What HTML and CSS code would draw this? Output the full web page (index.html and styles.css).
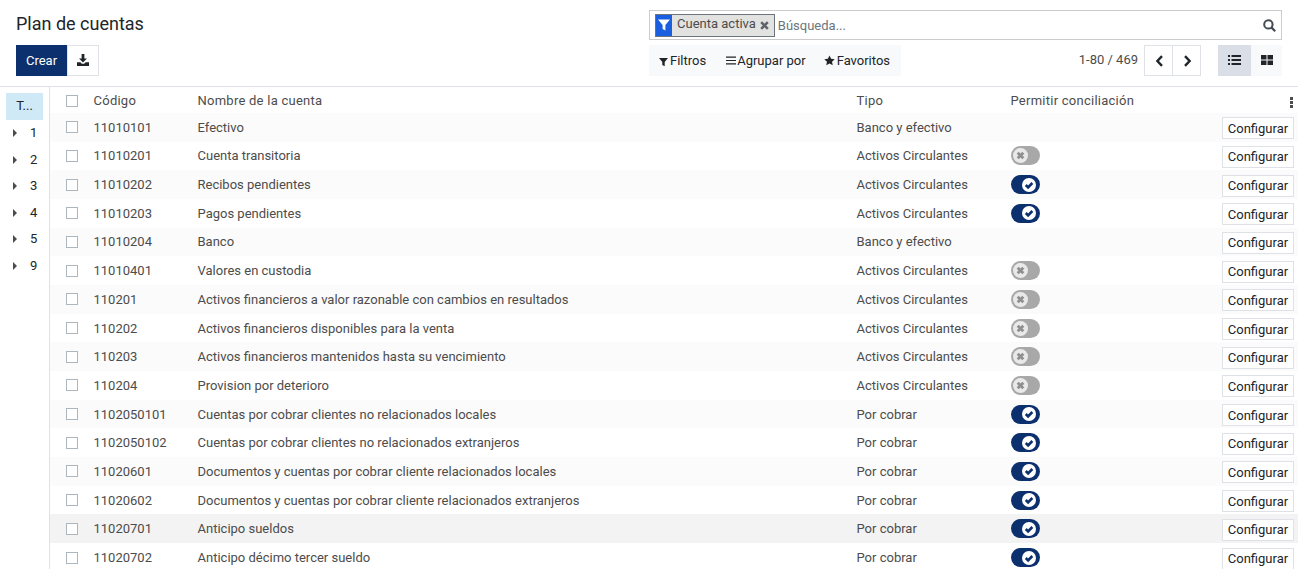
FILE: index.html
```html
<!DOCTYPE html>
<html lang="es">
<head>
    <meta charset="UTF-8">
    <title>Plan de cuentas</title>
    <link rel="stylesheet" href="styles.css">
</head>
<body>
    <svg class="sprites" width="0" height="0">
        <symbol id="i-check" viewBox="0 0 16 16"><circle cx="8" cy="8" r="8" fill="#fff"/><path d="M4.300 8 7 10.700l4.800-5" fill="none" stroke="#0c2f6e" stroke-width="3"/></symbol>
        <symbol id="i-cross" viewBox="0 0 16 16"><circle cx="8" cy="8" r="8" fill="#e9e9e9"/><path d="m5 5 6 6m0-6-6 6" fill="none" stroke="#8f8f8f" stroke-width="3"/></symbol>
    </svg>

    <header class="panel">
        <div class="panel-left">
            <h1 class="title">Plan de cuentas</h1>
            <div class="actions">
                <button class="btn-primary">Crear</button>
                <button class="btn-icon">
                    <svg width="12" height="12" viewBox="0 0 13 13"><path d="M5 0h3v5h2.800L6.500 9.300 2.200 5H5zM0 9h3.600l1.600 1.500h2.600L9.400 9H13v4H0z" fill="#212529"/></svg>
                </button>
            </div>
        </div>
        <div class="panel-right">
            <div class="search">
                <div class="facet">
                    <span class="facet-icon">
                        <svg width="12" height="12" viewBox="0 0 12 12"><path d="M0 .5h12L7.400 6v5.500L4.600 10V6z" fill="#fff"/></svg>
                    </span>
                    <span class="facet-label">Cuenta activa</span>
                    <svg class="facet-x" width="9" height="9" viewBox="0 0 9 9"><path d="m1.200 1.200 6.600 6.600m0-6.600L1.200 7.800" stroke="#5f636a" stroke-width="2.600"/></svg>
                </div>
                <span class="search-placeholder">Búsqueda...</span>
                <svg class="search-icon" width="13" height="13" viewBox="0 0 13 13"><circle cx="5.400" cy="5.400" r="4.200" fill="none" stroke="#444b52" stroke-width="2"/><path d="m8.600 8.600 3.600 3.600" stroke="#444b52" stroke-width="2.200"/></svg>
            </div>
            <div class="tools">
                <div class="filters">
                    <span class="filter"><svg width="9" height="10" viewBox="0 0 12 12"><path d="M0 .5h12L7.600 6v5.500L4.400 10V6z" fill="#212529"/></svg>Filtros</span>
                    <span class="filter"><svg class="group-icon" width="10" height="9" viewBox="0 0 10 9"><path d="M0 .5h10v1.200H0zM0 3.900h10v1.200H0zM0 7.300h10v1.200H0z" fill="#212529"/></svg>Agrupar por</span>
                    <span class="filter fav"><svg width="11" height="11" viewBox="0 0 20 20"><path d="m10 .8 2.900 6 6.600.8-4.900 4.500 1.300 6.600L10 15.400l-5.900 3.300 1.300-6.600L.5 7.600l6.600-.8z" fill="#212529"/></svg>Favoritos</span>
                </div>
                <div class="pager">
                    <span class="pager-count">1-80 / 469</span>
                    <div class="pager-btns">
                        <button class="btn-page"><svg width="9" height="12" viewBox="0 0 9 12"><path d="M7 1.200 2.400 6 7 10.800" fill="none" stroke="#212529" stroke-width="2.400"/></svg></button>
                        <button class="btn-page"><svg width="9" height="12" viewBox="0 0 9 12"><path d="M2 1.200 6.600 6 2 10.800" fill="none" stroke="#212529" stroke-width="2.400"/></svg></button>
                    </div>
                    <div class="views">
                        <button class="btn-view active"><svg width="13" height="10" viewBox="0 0 13 10"><path d="M0 0h2v2H0zM0 4h2v2H0zM0 8h2v2H0zM3.500 0H13v2H3.500zM3.500 4H13v2H3.500zM3.500 8H13v2H3.500z" fill="#212529"/></svg></button>
                        <button class="btn-view"><svg width="12" height="10" viewBox="0 0 12 10"><path d="M0 0h5.500v4.500H0zM6.500 0H12v4.500H6.500zM0 5.500h5.500V10H0zM6.500 5.500H12V10H6.500z" fill="#212529"/></svg></button>
                    </div>
                </div>
            </div>
        </div>
    </header>

    <main class="content">
        <aside class="side">
            <div class="side-item selected">T...</div>
            <div class="side-item"><i class="caret"></i>1</div>
            <div class="side-item"><i class="caret"></i>2</div>
            <div class="side-item"><i class="caret"></i>3</div>
            <div class="side-item"><i class="caret"></i>4</div>
            <div class="side-item"><i class="caret"></i>5</div>
            <div class="side-item"><i class="caret"></i>9</div>
        </aside>
        <div class="list">
            <div class="row head">
                <span class="box"></span><span>Código</span><span>Nombre de la cuenta</span><span>Tipo</span><span>Permitir conciliación</span>
                <span class="dots"><i></i><i></i><i></i></span>
            </div>
            <div class="row"><span class="box"></span><span>11010101</span><span>Efectivo</span><span>Banco y efectivo</span><span></span><button class="config">Configurar</button></div>
            <div class="row"><span class="box"></span><span>11010201</span><span>Cuenta transitoria</span><span>Activos Circulantes</span><span class="toggle off"><svg width="15" height="15"><use href="#i-cross"/></svg></span><button class="config">Configurar</button></div>
            <div class="row"><span class="box"></span><span>11010202</span><span>Recibos pendientes</span><span>Activos Circulantes</span><span class="toggle on"><svg width="14" height="14"><use href="#i-check"/></svg></span><button class="config">Configurar</button></div>
            <div class="row"><span class="box"></span><span>11010203</span><span>Pagos pendientes</span><span>Activos Circulantes</span><span class="toggle on"><svg width="14" height="14"><use href="#i-check"/></svg></span><button class="config">Configurar</button></div>
            <div class="row"><span class="box"></span><span>11010204</span><span>Banco</span><span>Banco y efectivo</span><span></span><button class="config">Configurar</button></div>
            <div class="row"><span class="box"></span><span>11010401</span><span>Valores en custodia</span><span>Activos Circulantes</span><span class="toggle off"><svg width="15" height="15"><use href="#i-cross"/></svg></span><button class="config">Configurar</button></div>
            <div class="row"><span class="box"></span><span>110201</span><span>Activos financieros a valor razonable con cambios en resultados</span><span>Activos Circulantes</span><span class="toggle off"><svg width="15" height="15"><use href="#i-cross"/></svg></span><button class="config">Configurar</button></div>
            <div class="row"><span class="box"></span><span>110202</span><span>Activos financieros disponibles para la venta</span><span>Activos Circulantes</span><span class="toggle off"><svg width="15" height="15"><use href="#i-cross"/></svg></span><button class="config">Configurar</button></div>
            <div class="row"><span class="box"></span><span>110203</span><span>Activos financieros mantenidos hasta su vencimiento</span><span>Activos Circulantes</span><span class="toggle off"><svg width="15" height="15"><use href="#i-cross"/></svg></span><button class="config">Configurar</button></div>
            <div class="row"><span class="box"></span><span>110204</span><span>Provision por deterioro</span><span>Activos Circulantes</span><span class="toggle off"><svg width="15" height="15"><use href="#i-cross"/></svg></span><button class="config">Configurar</button></div>
            <div class="row"><span class="box"></span><span>1102050101</span><span>Cuentas por cobrar clientes no relacionados locales</span><span>Por cobrar</span><span class="toggle on"><svg width="14" height="14"><use href="#i-check"/></svg></span><button class="config">Configurar</button></div>
            <div class="row"><span class="box"></span><span>1102050102</span><span>Cuentas por cobrar clientes no relacionados extranjeros</span><span>Por cobrar</span><span class="toggle on"><svg width="14" height="14"><use href="#i-check"/></svg></span><button class="config">Configurar</button></div>
            <div class="row"><span class="box"></span><span>11020601</span><span>Documentos y cuentas por cobrar cliente relacionados locales</span><span>Por cobrar</span><span class="toggle on"><svg width="14" height="14"><use href="#i-check"/></svg></span><button class="config">Configurar</button></div>
            <div class="row"><span class="box"></span><span>11020602</span><span>Documentos y cuentas por cobrar cliente relacionados extranjeros</span><span>Por cobrar</span><span class="toggle on"><svg width="14" height="14"><use href="#i-check"/></svg></span><button class="config">Configurar</button></div>
            <div class="row hover"><span class="box"></span><span>11020701</span><span>Anticipo sueldos</span><span>Por cobrar</span><span class="toggle on"><svg width="14" height="14"><use href="#i-check"/></svg></span><button class="config">Configurar</button></div>
            <div class="row"><span class="box"></span><span>11020702</span><span>Anticipo décimo tercer sueldo</span><span>Por cobrar</span><span class="toggle on"><svg width="14" height="14"><use href="#i-check"/></svg></span><button class="config">Configurar</button></div>
        </div>
    </main>
</body>
</html>
```

FILE: styles.css
```css
* {
    margin: 0;
    padding: 0;
    box-sizing: border-box;
}
html, body {
    height: 569px;
    overflow: hidden;
}
body {
    font-family: Roboto, "Liberation Sans", sans-serif;
    font-size: 13px;
    color: #4c4c4c;
    background: white;
}
button {
    font-family: inherit;
    font-size: 13px;
    cursor: pointer;
}
.sprites {
    position: absolute;
}
.panel {
    display: flex;
    height: 87px;
    padding: 10px 16px 0;
    border-bottom: 1px solid #dee2e6;
}
.panel-left {
    width: 633px;
}
.title {
    font-size: 18px;
    font-weight: 400;
    line-height: 28px;
    color: #212529;
}
.actions {
    display: flex;
    margin-top: 7px;
}
.btn-primary {
    width: 51px;
    height: 31px;
    background: #0c2f6e;
    border: none;
    color: white;
}
.btn-icon {
    display: flex;
    align-items: center;
    justify-content: center;
    width: 32px;
    height: 31px;
    padding-bottom: 2px;
    background: white;
    border: 1px solid #dee2e6;
}
.panel-right {
    flex: 1;
}
.search {
    display: flex;
    align-items: center;
    height: 30px;
    padding: 0 5px;
    border: 1px solid #ccc;
}
.facet {
    display: flex;
    align-items: center;
    height: 23px;
    background: #e2e2e0;
    border: 1px solid #6c757d;
}
.facet-icon {
    display: flex;
    align-items: center;
    justify-content: center;
    width: 16px;
    height: 21px;
    background: #1a5fe0;
}
.facet-label {
    margin: -3px 4px 0 5px;
}
.facet-x {
    margin-right: 5px;
}
.search-placeholder {
    margin-left: 3px;
    color: #6c757d;
}
.search-icon {
    margin-left: auto;
}
.tools {
    display: flex;
    justify-content: space-between;
    margin-top: 5px;
}
.filters {
    display: flex;
    align-items: center;
    gap: 19px;
    height: 31px;
    padding: 0 11px 0 10px;
    background: #f8f9fa;
    color: #212529;
}
.filter {
    display: flex;
    align-items: center;
    gap: 2px;
}
.filter:first-child svg {
    margin-top: 2px;
}
.filter.fav {
    margin-left: -1px;
}
.group-icon {
    margin: 0 -1px 0 1px;
}
.pager {
    display: flex;
    align-items: center;
}
.pager-count {
    margin-right: 7px;
    margin-top: -2px;
}
.pager-btns {
    display: flex;
    margin-right: 17px;
}
.btn-page {
    display: flex;
    align-items: center;
    justify-content: center;
    width: 29px;
    height: 31px;
    margin-left: -1px;
    padding-left: 2px;
    background: white;
    border: 1px solid #dee2e6;
}
.views {
    display: flex;
}
.btn-view {
    display: flex;
    align-items: center;
    justify-content: center;
    width: 31px;
    height: 31px;
    padding-bottom: 2px;
    border: none;
    background: #f8f9fa;
}
.btn-view.active {
    width: 33px;
    background: #d9dee7;
}
.content {
    display: flex;
}
.side {
    flex: none;
    width: 50px;
    height: 482px;
    padding: 6px 6px 0;
    border-right: 1px solid #dee2e6;
}
.side-item {
    position: relative;
    height: 26.5px;
    line-height: 26px;
    padding-left: 24px;
    color: #212529;
}
.side-item.selected {
    height: 27px;
    padding-left: 0;
    margin-bottom: -1px;
    background: #d0e9f7;
    text-align: center;
}
.side-item:nth-child(2) {
    margin-top: 1px;
}
.caret {
    position: absolute;
    left: 7px;
    top: 9px;
    border-left: 4px solid #4c4c4c;
    border-top: 4px solid transparent;
    border-bottom: 4px solid transparent;
}
.list {
    flex: 1;
}
.row {
    display: grid;
    grid-template-columns: 27.5px 104px 659px 154px 1fr 72px;
    align-items: center;
    height: 28.7px;
    padding: 0 4px 0 16px;
}
.row:nth-child(even) {
    background: #fbfbfb;
}
.row.hover {
    background: #f3f3f3;
}
.row.head {
    height: 25.87px;
    padding-top: 2px;
    letter-spacing: 0.25px;
    background: white;
}
.box {
    width: 12px;
    height: 12px;
    background: white;
    border: 1px solid #adb5bd;
}
.dots {
    display: flex;
    flex-direction: column;
    align-items: flex-end;
    gap: 1px;
    padding-right: 1px;
    margin-top: 3px;
}
.dots i {
    width: 3px;
    height: 3px;
    background: #4c4c4c;
}
.toggle {
    display: flex;
    align-items: center;
    width: 29px;
    height: 19px;
    padding: 0 2px;
    border-radius: 10px;
}
.toggle.on {
    justify-content: flex-end;
    padding-right: 4px;
    background: #0c2f6e;
}
.toggle.off {
    background: #a8a8a8;
}
.config {
    width: 72px;
    height: 22px;
    margin-top: 2px;
    background: white;
    border: 1px solid #dee2e6;
    color: #212529;
}
```
